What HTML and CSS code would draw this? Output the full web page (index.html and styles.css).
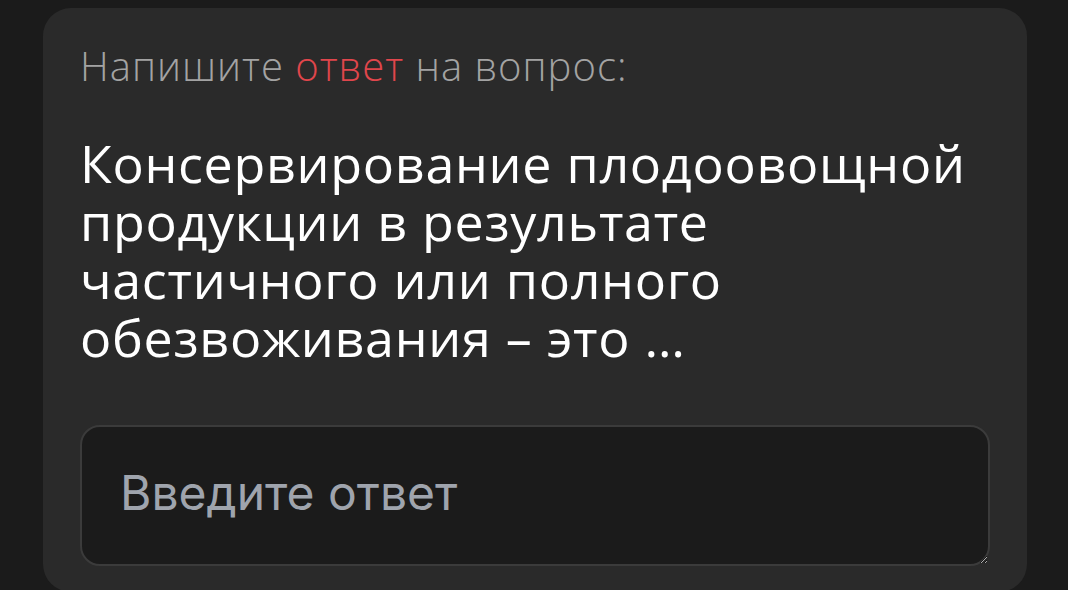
FILE: index.html
```html
<!DOCTYPE html>
<html lang="ru">
<head>
<meta charset="utf-8">
<link rel="stylesheet" href="styles.css">
</head>
<body>
<div class="card">
  <div class="hint">Напишите <span class="accent">ответ</span> на вопрос:</div>
  <div class="question">Консервирование плодоовощной продукции в результате частичного или полного обезвоживания – это …</div>
  <textarea class="answer" placeholder="Введите ответ"></textarea>
</div>
</body>
</html>
```
FILE: styles.css
```css
html, body {
  margin: 0;
  padding: 0;
  background: #1b1b1b;
  height: 100%;
  overflow: hidden;
}
.card {
  margin: 8px 0 0 43px;
  width: 984px;
  height: 584px;
  box-sizing: border-box;
  background: #2a2a2a;
  border-radius: 28px;
  padding: 34px 37px 0 37px;
}
.hint {
  font-family: "Open Sans", sans-serif;
  font-weight: 300;
  font-size: 40px;
  line-height: 48px;
  letter-spacing: 1px;
  color: #a3a3a3;
}
.accent {
  color: #e0464c;
}
.question {
  margin-top: 44px;
  font-family: "Open Sans", sans-serif;
  font-weight: 400;
  font-size: 52px;
  line-height: 58px;
  letter-spacing: 0.7px;
  color: #ffffff;
}
.answer {
  display: block;
  margin-top: 59px;
  width: 910px;
  height: 141px;
  box-sizing: border-box;
  background: #1b1b1b;
  border: 2px solid #3b3b3b;
  border-radius: 20px;
  padding: 37px 38px;
  font-family: Inter, sans-serif;
  font-size: 48px;
  line-height: 58px;
  color: #fff;
  outline: none;
}
.answer::placeholder {
  color: #9fa4ad;
}
```
